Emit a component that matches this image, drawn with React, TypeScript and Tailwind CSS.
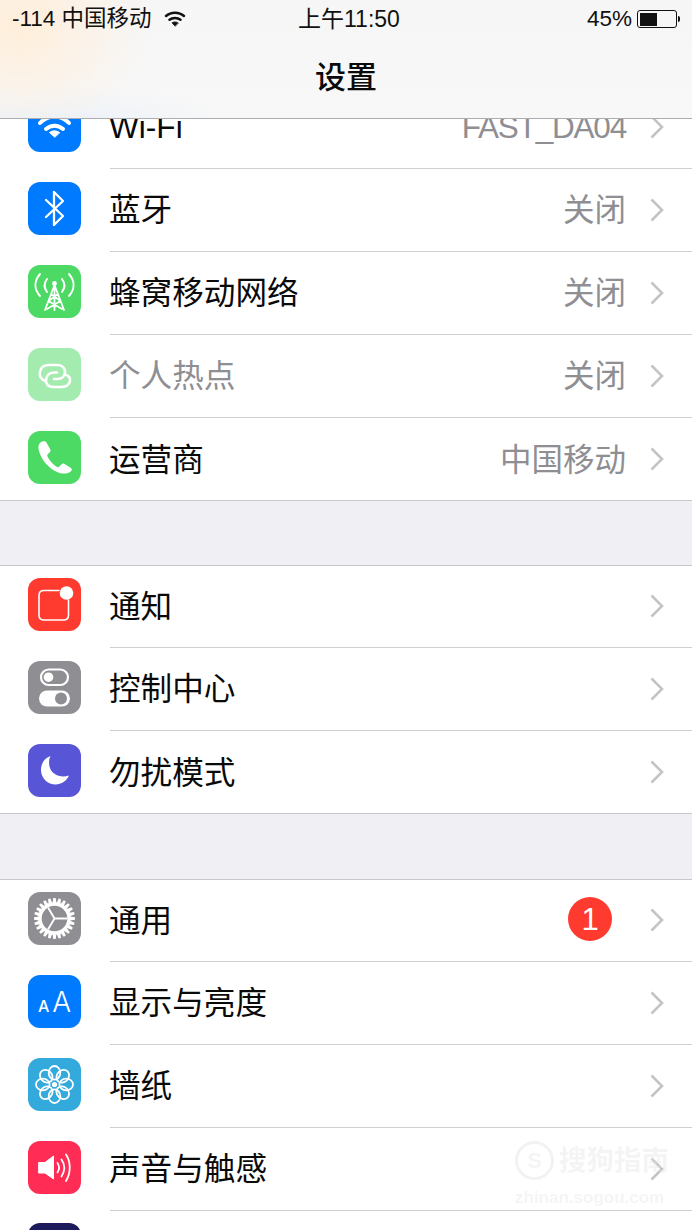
import React from "react";

const Sv = ({ children }: { children: React.ReactNode }) => (
  <svg viewBox="0 0 53 53" width="53" height="53" fill="none" stroke="white" strokeLinecap="round" strokeLinejoin="round">
    {children}
  </svg>
);

const Chevron = () => (
  <svg width="16" height="26" viewBox="0 0 16 26" fill="none" stroke="#c4c4c8" strokeWidth="2.6" className="-mt-[1px] shrink-0">
    <path d="M2.5 2.5 L13 13 L2.5 23.5" />
  </svg>
);

const WifiGlyph = () => (
  <Sv>
    <g transform="translate(0 4)">
      <path d="M12 20 C20 11.5 33 11.5 41 20" strokeWidth="4" />
      <path d="M18 26 C23 21.5 30 21.5 35 26" strokeWidth="4" />
      <path d="M26.5 34 L21.5 29.5 C24.5 27.3 28.5 27.3 31.5 29.5 Z" fill="white" strokeWidth="1" />
    </g>
  </Sv>
);

const Bluetooth = () => (
  <Sv>
    <path d="M18 18 L35 34 L26 43 L26 10 L35 19 L18 35" strokeWidth="2.3" />
  </Sv>
);

const Tower = () => (
  <Sv>
    <path d="M26.5 20 L17 45 M26.5 20 L36 45 M26.5 22 V45 M20.5 36 L34 44 M32.5 36 L19 44 M23 29 L32.5 36 M30 29 L20.5 36" strokeWidth="1.8" />
    <circle cx="26.5" cy="18.5" r="2.4" fill="white" stroke="none" />
    <path d="M19 14 C16 18 16 23 19 27 M34 14 C37 18 37 23 34 27" strokeWidth="2" />
    <path d="M12 9 C6 16 6 24 12 31 M41 9 C47 16 47 24 41 31" strokeWidth="2" />
  </Sv>
);

const Hotspot = () => (
  <Sv>
    <path d="M17 33 C12.5 31 11 27 12 23.5 C13 19.5 16.5 17 21 17 H29 C34 17 37 20 37 24 C37 28 34 31 29.5 31 H26" strokeWidth="2.6" />
    <path d="M37 26.5 C40.5 27.5 42.5 30 42 33 C41.5 36.5 38 39 33 39 H25 C20.5 39 17.5 36 18 32 C18.5 27 22 24.5 26 24.5 H29" strokeWidth="2.6" />
  </Sv>
);

const PhoneGlyph = () => (
  <Sv>
    <path
      d="M13 11 C11 12.5 10 15 10.5 18 C12 26 18 35 27 40 C32 43 38 43.5 42 41 C44 40 44.5 38 43 37 L36.5 33 C35.5 32.3 34.5 32.5 33.7 33.3 L31.5 35.5 C30.5 36.3 29.5 36.3 28.5 35.7 C25 33.5 21.5 29.5 19.5 25.5 C19 24.5 19.2 23.7 20 23 L22 21 C22.7 20.3 22.8 19.3 22.3 18.5 L18.5 11.5 C17.5 10 15 9.8 13 11 Z"
      fill="white"
      stroke="none"
    />
  </Sv>
);

const Notify = () => (
  <Sv>
    <path d="M31 12.5 H16 C13 12.5 11 14.5 11 17.5 V37 C11 40 13 42 16 42 H35.5 C38.5 42 40.5 40 40.5 37 V22" strokeWidth="1.6" />
    <circle cx="38.5" cy="15" r="6.8" fill="white" stroke="none" />
  </Sv>
);

const Toggles = () => (
  <Sv>
    <rect x="13" y="8.5" width="27" height="15.5" rx="7.75" strokeWidth="2.2" />
    <circle cx="20.5" cy="16.2" r="4.8" fill="white" stroke="none" />
    <rect x="11" y="29.5" width="31" height="16" rx="8" fill="white" stroke="none" />
    <circle cx="33" cy="37.5" r="6" fill="#8e8e93" stroke="none" />
  </Sv>
);

const Moon = () => (
  <svg viewBox="0 0 53 53" width="53" height="53">
    <path d="M22.5 12 C15.5 14.5 13 20.5 13 26 C13 34.5 20 40.5 27.5 40.5 C33.5 40.5 38.5 37 41 31.5 C32.5 34.5 23.5 30.5 21.5 22.5 C20.7 18.5 21 15 22.5 12 Z" fill="white" />
  </svg>
);

const Gear = () => {
  const teeth = Array.from({ length: 24 }, (_, i) => (i * 360) / 24);
  return (
    <Sv>
      {teeth.map((a) => (
        <path key={a} d="M24.3 13 L25.3 6 H27.7 L28.7 13 Z" fill="white" stroke="none" transform={`rotate(${a} 26.5 26.5)`} />
      ))}
      <circle cx="26.5" cy="26.5" r="14.5" strokeWidth="3.4" />
      <path d="M26.5 26.5 L20 15.5 M26.5 26.5 L39 26.5 M26.5 26.5 L20 37.5" strokeWidth="1.9" strokeLinecap="butt" />
    </Sv>
  );
};

const AaGlyph = () => (
  <div className="flex items-baseline gap-[3px] font-['Inter',sans-serif] leading-none text-white">
    <span className="text-[16px] font-medium">A</span>
    <span className="text-[28px] font-light">A</span>
  </div>
);

const Flower = () => {
  const petals = Array.from({ length: 8 }, (_, i) => i * 45);
  return (
    <Sv>
      {petals.map((a) => (
        <ellipse key={a} cx="26.5" cy="14.8" rx="5.8" ry="6.8" strokeWidth="1.8" transform={`rotate(${a} 26.5 26.5)`} />
      ))}
      <circle cx="26.5" cy="26.5" r="2.6" fill="white" stroke="none" />
    </Sv>
  );
};

const Sound = () => (
  <Sv>
    <path d="M11 21.5 H17 L25.5 15 V38 L17 32 H11 Z" fill="white" strokeWidth="1" />
    <path d="M29.5 22 C31.5 25 31.5 28.5 29.5 31.5" strokeWidth="1.8" />
    <path d="M33.5 18.5 C37 23.5 37 30 33.5 35.5" strokeWidth="1.8" />
    <path d="M38 13.5 C43 21 43 32 38 40" strokeWidth="1.8" />
  </Sv>
);

type RowProps = {
  icon: React.ReactNode;
  color: string;
  label: string;
  value?: string;
  dim?: boolean;
  badge?: boolean;
  last?: boolean;
  first?: boolean;
  tight?: boolean;
};

const Row = ({ icon, color, label, value, dim, badge, last, first, tight }: RowProps) => (
  <div className={`flex shrink-0 items-start pl-[28px] ${first ? "h-[82px]" : "h-[83px]"}`}>
    <div
      className={`flex h-[53px] w-[53px] shrink-0 items-center justify-center overflow-hidden rounded-[12px] ${first ? "mt-[12px]" : "mt-[13px]"} ${color} ${dim ? "opacity-50" : ""}`}
    >
      {icon}
    </div>
    <div className={`ml-[29px] flex h-full min-w-0 flex-1 items-center pr-[27px] ${last ? "" : "border-b border-[#cfcfd2]"}`}>
      <span className={`-ml-[1px] mt-[2px] flex-1 text-[31.6px] leading-none ${dim ? "text-[#8e8e93]" : "text-[#0a0a0a]"}`}>{label}</span>
      {value && (
        <span className={`mr-[23px] mt-[2px] text-[31.5px] leading-none text-[#8e8e93] ${tight ? "tracking-[-1.2px]" : ""}`}>{value}</span>
      )}
      {badge && (
        <span className="mb-[3px] mr-[37px] flex h-[44px] w-[44px] items-center justify-center rounded-full bg-[#ff3b30] text-[31px] leading-none text-white">
          1
        </span>
      )}
      <Chevron />
    </div>
  </div>
);

const Battery = () => (
  <div className="flex items-center">
    <div className="flex h-[18px] w-[40px] items-center rounded-[3px] border border-[#111] p-[1.5px]">
      <div className="h-full w-[17px] bg-[#111]" />
    </div>
    <div className="ml-[1px] h-[6px] w-[2px] rounded-r-[2px] bg-[#111]" />
  </div>
);

const StatusWifi = () => (
  <svg width="24" height="18" viewBox="0 0 22 18" fill="none" stroke="#111" strokeLinecap="round" className="ml-[11px]">
    <path d="M2 6 C7 1.5 15 1.5 20 6" strokeWidth="2.5" />
    <path d="M5.5 9.8 C8.5 7.3 13.5 7.3 16.5 9.8" strokeWidth="2.5" />
    <path d="M11 16 L8 12.8 C9.8 11.6 12.2 11.6 14 12.8 Z" fill="#111" stroke="#111" strokeWidth="0.8" />
  </svg>
);

export default function App() {
  return (
    <div className="relative flex h-[1230px] w-[692px] flex-col overflow-hidden bg-[#efeff4] font-['Liberation_Sans','Noto_Sans_CJK_SC',sans-serif]">
      <header className="h-[119px] shrink-0 border-b border-[#adadb0] bg-[radial-gradient(ellipse_130px_110px_at_20px_25px,#ffeeda,transparent),radial-gradient(ellipse_200px_40px_at_40px_125px,#eaf0f8,transparent),linear-gradient(#f6f6f6,#f8f8f8)]">
        <div className="relative flex h-[38px] items-center px-[12px] text-[22.5px] leading-none text-[#111]">
          <span>-114 中国移动</span>
          <StatusWifi />
          <span className="flex-1" />
          <span>45%</span>
          <span className="ml-[5px]">
            <Battery />
          </span>
          <span className="absolute left-[298px] top-[8px] text-[23px]">上午11:50</span>
        </div>
        <div className="flex h-[80px] items-start justify-center pt-[1px]">
          <span className="text-[31px] font-medium leading-[78px] text-[#0a0a0a]">设置</span>
        </div>
      </header>

      <section className="shrink-0 border-b border-[#c8c7cc] bg-white">
        <div className="h-[50px] overflow-hidden">
          <div className="-mt-[33px]">
            <Row icon={<WifiGlyph />} color="bg-[#007aff]" label="Wi-Fi" value="FAST_DA04" tight />
          </div>
        </div>
        <Row icon={<Bluetooth />} color="bg-[#007aff]" label="蓝牙" value="关闭" />
        <Row icon={<Tower />} color="bg-[#4cd964]" label="蜂窝移动网络" value="关闭" />
        <Row icon={<Hotspot />} color="bg-[#4cd964]" label="个人热点" value="关闭" dim />
        <div className="h-[82px] overflow-visible">
          <Row icon={<PhoneGlyph />} color="bg-[#4cd964]" label="运营商" value="中国移动" last />
        </div>
      </section>

      <div className="h-[64px] shrink-0" />

      <section className="shrink-0 border-y border-[#c8c7cc] bg-white">
        <Row icon={<Notify />} color="bg-[#ff3b30]" label="通知" first />
        <Row icon={<Toggles />} color="bg-[#8e8e93]" label="控制中心" />
        <div className="h-[82px] overflow-visible">
          <Row icon={<Moon />} color="bg-[#5856d6]" label="勿扰模式" last />
        </div>
      </section>

      <div className="h-[65px] shrink-0" />

      <section className="flex-1 border-t border-[#c8c7cc] bg-white">
        <Row icon={<Gear />} color="bg-[#8e8e93]" label="通用" badge first />
        <Row icon={<AaGlyph />} color="bg-[#007aff]" label="显示与亮度" />
        <Row icon={<Flower />} color="bg-[#34aadc]" label="墙纸" />
        <Row icon={<Sound />} color="bg-[#ff2d55]" label="声音与触感" />
        <Row icon={null} color="bg-[#1d1a5c]" label="" last first />
      </section>

      <div className="pointer-events-none absolute left-[515px] top-[1141px] flex flex-col text-[#e6e6e6] opacity-40 blur-[0.5px]">
        <div className="flex items-center gap-[5px]">
          <span className="flex h-[39px] w-[39px] items-center justify-center rounded-full border-[3px] border-[#e0e0e0] text-[22px] font-bold leading-none">S</span>
          <span className="text-[27.5px] font-bold leading-none">搜狗指南</span>
        </div>
        <span className="mt-[9px] text-[17px] font-bold leading-none">zhinan.sogou.com</span>
      </div>
    </div>
  );
}
